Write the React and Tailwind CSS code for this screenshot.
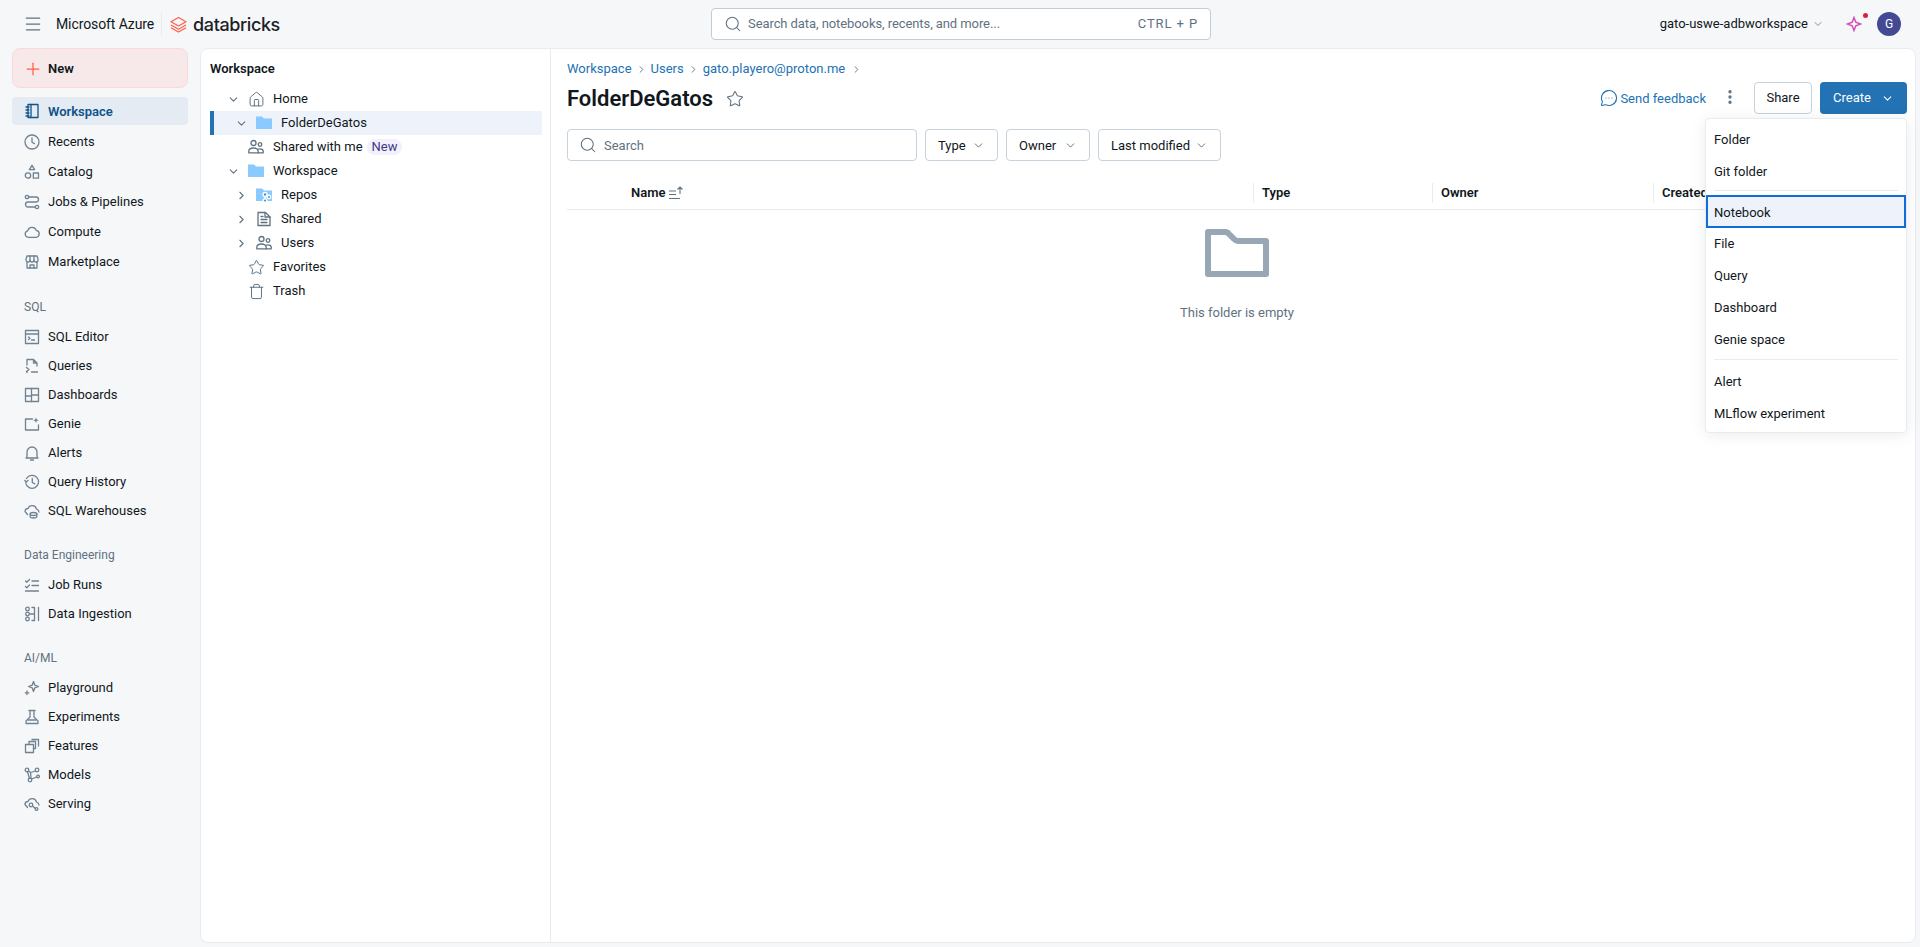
import { ChevronDown, ChevronRight, Menu, Plus, Search, Star, MoreVertical, MessageCircleMore, House, Trash } from 'lucide-react'

const FONT = "font-['Roboto','Noto_Sans',sans-serif]"

// stroke icon drawn on a 16 grid, same look as the product's icon set
function Ico({ children, size = 16, className = 'text-[#6f8291]' }) {
  return (
    <svg width={size} height={size} viewBox="0 0 16 16" fill="none" stroke="currentColor" strokeWidth="1.3" strokeLinecap="round" strokeLinejoin="round" className={`shrink-0 ${className}`}>
      {children}
    </svg>
  )
}

const icons = {
  workspace: <><path d="M4 1.5h10v13H4z" /><path d="M7 1.5v13" /><path d="M2 4h3M2 7h3M2 10h3M2 13h3" /></>,
  clock: <><circle cx="8" cy="8" r="7" /><path d="M8 4v4.2l2.4 1.4" /></>,
  catalog: <><path d="M8 1.3l2.6 4.4H5.400z" /><circle cx="4" cy="11.500" r="2.700" /><rect x="9.300" y="9" width="5.200" height="5.200" /></>,
  jobs: <><circle cx="3" cy="3" r="1.700" /><circle cx="13" cy="13" r="1.700" /><path d="M4.700 3H12a2.500 2.500 0 0 1 0 5H4a2.500 2.500 0 0 0 0 5h7.300" /></>,
  cloud: <path d="M4.300 13.300a3.300 3.300 0 0 1-.6-6.500 4.500 4.500 0 0 1 8.600-.4 3.500 3.500 0 0 1 0 6.900z" />,
  market: <><path d="M3 8v6h10V8" /><path d="M2 5l1-3h10l1 3v1a2 2 0 0 1-4 0 2 2 0 0 1-4 0 2 2 0 0 1-4 0z" /><path d="M6 14v-3h4v3M6 2v4M10 2v4" /></>,
  sqleditor: <><rect x="1.500" y="1.500" width="13" height="13" /><path d="M1.500 5h13" /><path d="M4.500 8l1.500 1.300-1.500 1.300M7.500 11h3" /></>,
  queries: <><path d="M3 7V1.500h6.500L13 5v3M9.500 1.500V5H13" /><path d="M3 14.500V13M2.500 9.500l2.500 2-2.500 2M7.500 14h6" /></>,
  dash: <><rect x="1.500" y="1.500" width="13" height="13" /><path d="M7.500 1.500v13M7.500 8h7" /><path d="M1.500 9h6" /></>,
  genie: <><path d="M8.500 3H1.500v11h13V9" /><path d="M12 1.500l.8 2 2 .8-2 .8-.8 2-.8-2-2-.8 2-.8z" fill="currentColor" stroke="none" /></>,
  bell: <><path d="M3 11.500V7a5 5 0 0 1 10 0v4.500l1 1.500H2z" /><path d="M6.500 15h3" /></>,
  history: <><path d="M2.500 4.500A6.500 6.500 0 1 1 1.700 9" /><path d="M.8 6.500l1.500 1.500 1.700-1.500" /><path d="M8.300 4.500v4l2.500 1.300" /></>,
  warehouse: <><path d="M3.500 11.500L1 8.500a3 3 0 0 1 3-3 4.500 4.500 0 0 1 8.500.5 3.500 3.500 0 0 1 2.500 3" /><ellipse cx="9.500" cy="11" rx="3.300" ry="1.500" /><path d="M6.200 11v2.500c0 .9 1.500 1.500 3.300 1.500s3.300-.6 3.300-1.500V11" /></>,
  jobruns: <><path d="M1.500 4l1.300 1.300L5.500 2.500M1.500 9.500l1.300 1.300 2.700-2.800" /><path d="M8 4h6.500M8 8.500h6.500M1.500 14h13" /></>,
  ingest: <><circle cx="3.500" cy="3" r="1.800" /><circle cx="3.500" cy="8" r="1.800" /><circle cx="3.500" cy="13" r="1.800" /><path d="M8 1.500h2.500v13H8M14.500 1.500v13M5.500 8h5" /></>,
  play: <><path d="M9.500 1.500l1.300 3.700 3.700 1.300-3.700 1.300-1.300 3.700-1.300-3.700L4.500 6.500l3.700-1.300z" /><path d="M3 11v3.500M1.200 12.800h3.600" /></>,
  flask: <><path d="M5 1.500h6M6 1.500V8l-4 4v2.500h12V12l-4-4V1.500" /><path d="M4 11h8" /></>,
  features: <><rect x="1.500" y="6.500" width="8" height="8" /><path d="M5 6.500V3.500h6.500v7H9.500M8 1.500h6.500V8" /></>,
  models: <><circle cx="3" cy="3" r="1.800" /><circle cx="13" cy="3" r="1.800" /><circle cx="6" cy="13" r="1.800" /><circle cx="14" cy="9.500" r="1.400" /><path d="M4.500 4l2 1.500 5-1.500M3.500 5l2 6.500M6.500 5.500L7 11M7.500 12l5.300-2" /></>,
  serving: <><path d="M3.500 11.500L1 8.500a3 3 0 0 1 3-3 4.500 4.500 0 0 1 8.500.5 3.500 3.500 0 0 1 2.500 3" /><circle cx="7" cy="9" r="1.800" /><path d="M8.500 10l2.800 2.500" /><circle cx="12.500" cy="13" r="1.400" /></>,
  people: <><circle cx="5.500" cy="4" r="2.500" /><circle cx="12" cy="5.500" r="1.800" /><path d="M.8 13.800v-1.300c0-2 1.800-3.500 4.700-3.500s4.700 1.500 4.700 3.500v1.300z" /><path d="M10.200 13.800h5v-1.500c0-1.500-1.500-2.500-3.200-2.500-.8 0-1.500.2-2 .5" /></>,
  doc: <><path d="M2 1.500h7.500l4.500 4.500v8.500H2z" /><path d="M9 1.500V6h5M5 8.500h6M5 11.500h6M5 5.500h2" /></>,
}

const PRIMARY = [['Recents', 'clock'], ['Catalog', 'catalog'], ['Jobs & Pipelines', 'jobs'], ['Compute', 'cloud'], ['Marketplace', 'market']]
const SECTIONS = [
  { title: 'SQL', items: [['SQL Editor', 'sqleditor'], ['Queries', 'queries'], ['Dashboards', 'dash'], ['Genie', 'genie'], ['Alerts', 'bell'], ['Query History', 'history'], ['SQL Warehouses', 'warehouse']] },
  { title: 'Data Engineering', items: [['Job Runs', 'jobruns'], ['Data Ingestion', 'ingest']] },
  { title: 'AI/ML', items: [['Playground', 'play'], ['Experiments', 'flask'], ['Features', 'features'], ['Models', 'models'], ['Serving', 'serving']] },
]
const MENU_TOP = ['Folder', 'Git folder']
const MENU_MID = ['File', 'Query', 'Dashboard', 'Genie space']
const MENU_END = ['Alert', 'MLflow experiment']

function FolderIcon({ git }) {
  return (
    <svg width="16" height="16" viewBox="0 0 16 16" className="shrink-0">
      <path d="M0 1.500h6l2 2h8v10.500H0z" fill="#8acaff" />
      {git && <g stroke="#fff" strokeWidth="1.400" fill="#4299e0"><path d="M9 8v5M9 9.500h4" fill="none" /><circle cx="9" cy="7.500" r="2" /><circle cx="13" cy="10" r="1.700" /><circle cx="9" cy="13.500" r="1.800" /></g>}
    </svg>
  )
}

function NavRow({ label, icon, tall }) {
  return (
    <div className={`flex items-center gap-[8px] pl-[12px] rounded-[4px] text-[13px] text-[#11171c] ${tall ? 'h-[30px]' : 'h-[29px]'}`}>
      <Ico><>{icons[icon]}</></Ico>
      <span>{label}</span>
    </div>
  )
}

function Sidebar() {
  return (
    <aside className="w-[200px] shrink-0 pl-[12px] pr-[12px] pb-[4px]">
      <div className="h-[40px] flex items-center gap-[5px] pl-[10px] pt-[1px] rounded-[8px] bg-[#f7e9e9] border border-[#fad9d9] text-[13px] font-semibold text-[#11171c]">
        <Plus size={20} strokeWidth={1.5} className="text-[#ff5f46]" />
        New
      </div>
      <div className="mt-[9px] h-[28px] mb-[1px] flex items-center gap-[8px] pl-[12px] pt-[2px] rounded-[4px] bg-[#e4ebf3] text-[13px] font-semibold text-[#0e538b]">
        <Ico className="text-[#0e538b] mt-[-2px]">{icons.workspace}</Ico>
        Workspace
      </div>
      <div className="pt-[1px]">
        {PRIMARY.map(([label, icon]) => <NavRow key={label} label={label} icon={icon} tall />)}
      </div>
      {SECTIONS.map(s => (
        <div key={s.title} className="mt-[15px]">
          <div className="h-[30px] flex items-center pl-[12px] text-[12px] text-[#5f7281]">{s.title}</div>
          {s.items.map(([label, icon]) => <NavRow key={label} label={label} icon={icon} />)}
        </div>
      ))}
    </aside>
  )
}

function TreeRow({ indent, chevron, icon, label, selected, badge }) {
  return (
    <div className={`h-[24px] flex items-center text-[13px] text-[#11171c] ${selected ? 'bg-[#eef3fb] border-l-[4px] border-[#2272b4]' : ''}`} style={{ paddingLeft: selected ? indent - 4 : indent }}>
      <span className="w-[16px] mr-[7px] flex justify-center shrink-0">
        {chevron === 'down' && <ChevronDown size={13} strokeWidth={2} className="text-[#5f7281]" />}
        {chevron === 'right' && <ChevronRight size={13} strokeWidth={2} className="text-[#5f7281]" />}
      </span>
      {icon}
      <span className="ml-[9px]">{label}</span>
      {badge && <span className="ml-[4px] px-[5px] h-[16px] rounded-[8px] bg-[#f3f0fb] text-[#3f3a86] flex items-center">{badge}</span>}
    </div>
  )
}

function Tree() {
  return (
    <div className="w-[350px] shrink-0 border-r border-[#e8ecf0] pl-[9px] pr-[8px] pt-[9px]">
      <div className="h-[21px] flex items-center text-[13px] font-semibold text-[#11171c] mb-[8px]">Workspace</div>
      <TreeRow indent={15} chevron="down" label="Home" icon={<House size={17} strokeWidth={1.4} className="text-[#5f7281] mx-[-0.5px]" />} />
      <TreeRow indent={23} chevron="down" label="FolderDeGatos" selected icon={<FolderIcon />} />
      <TreeRow indent={15} label="Shared with me" badge="New" icon={<Ico className="text-[#5f7281]">{icons.people}</Ico>} />
      <TreeRow indent={15} chevron="down" label="Workspace" icon={<FolderIcon />} />
      <TreeRow indent={23} chevron="right" label="Repos" icon={<FolderIcon git />} />
      <TreeRow indent={23} chevron="right" label="Shared" icon={<Ico className="text-[#5f7281]">{icons.doc}</Ico>} />
      <TreeRow indent={23} chevron="right" label="Users" icon={<Ico className="text-[#5f7281]">{icons.people}</Ico>} />
      <TreeRow indent={15} label="Favorites" icon={<Star size={17} strokeWidth={1.4} className="text-[#5f7281] mx-[-0.5px]" />} />
      <TreeRow indent={15} label="Trash" icon={<Trash size={17} strokeWidth={1.4} className="text-[#5f7281] mx-[-0.5px]" />} />
    </div>
  )
}

function FilterButton({ label, className }) {
  return (
    <div className={`h-[32px] flex items-center justify-between pl-[12px] pr-[12px] rounded-[4px] border border-[#c8d2db] text-[13px] text-[#11171c] ${className}`}>
      <span className="mt-[2px]">{label}</span>
      <ChevronDown size={13} strokeWidth={1.8} className="text-[#5f7281]" />
    </div>
  )
}

function MenuItem({ label }) {
  return <div className="h-[32px] flex items-center px-[8px] text-[13px] text-[#11171c]">{label}</div>
}

function CreateMenu() {
  return (
    <div className="absolute right-[8px] top-[69px] w-[202px] h-[315px] bg-white rounded-[4px] border border-[#e8ecf0] shadow-[0_2px_16px_rgba(0,0,0,0.08)] pt-[5px] z-10">
      {MENU_TOP.map(m => <MenuItem key={m} label={m} />)}
      <div className="mx-[8px] mt-[2px] mb-[4px] border-t border-[#e8ecf0]" />
      <div className="h-[33px] flex items-center px-[6px] pt-[2px] text-[13px] text-[#11171c] bg-[#eef3fb] border-2 border-[#0f6cd8]">Notebook</div>
      {MENU_MID.map(m => <MenuItem key={m} label={m} />)}
      <div className="mx-[8px] mt-[3px] mb-[6px] border-t border-[#e8ecf0]" />
      {MENU_END.map(m => <MenuItem key={m} label={m} />)}
    </div>
  )
}

function Content() {
  return (
    <div className="flex-1 min-w-0 relative pl-[16px] pr-[8px] pt-[10px]">
      <div className="h-[20px] flex items-center gap-[4px] text-[13px] text-[#2272b4]">
        <span>Workspace</span><ChevronRight size={11} className="text-[#5f7281]" />
        <span>Users</span><ChevronRight size={11} className="text-[#5f7281]" />
        <span className="mr-[2px]">gato.playero@proton.me</span><ChevronRight size={11} className="text-[#5f7281]" />
      </div>
      <div className="flex items-center mt-[3px] h-[32px]">
        <h1 className="text-[22px] font-semibold text-[#11171c]">FolderDeGatos</h1>
        <Star size={18} strokeWidth={1.4} className="text-[#5f7281] ml-[13px] mt-[2px]" />
        <div className="ml-auto flex items-center">
          <MessageCircleMore size={18} strokeWidth={1.5} className="text-[#2272b4]" />
          <span className="ml-[2px] mt-[2px] text-[13px] text-[#2272b4]">Send feedback</span>
          <MoreVertical size={18} strokeWidth={2.4} className="text-[#5f7281] ml-[15px] mt-[-2px]" />
          <div className="ml-[15px] w-[58px] h-[32px] flex items-center justify-center rounded-[4px] border border-[#c8d2db] text-[13px] text-[#11171c]">Share</div>
          <div className="ml-[8px] w-[87px] h-[32px] flex items-center justify-center gap-[10px] rounded-[4px] bg-[#2272b4] text-[13px] text-white">
            Create <ChevronDown size={13} strokeWidth={2} />
          </div>
        </div>
      </div>
      <div className="flex items-center mt-[15px] gap-[8px]">
        <div className="w-[350px] h-[32px] flex items-center gap-[7px] pl-[11px] rounded-[4px] border border-[#c8d2db] text-[13px] text-[#5f7281]">
          <Search size={18} strokeWidth={1.4} />
          <span className="mt-[2px]">Search</span>
        </div>
        <FilterButton label="Type" className="w-[73px]" />
        <FilterButton label="Owner" className="w-[84px]" />
        <FilterButton label="Last modified" className="w-[123px]" />
      </div>
      <div className="mt-[12px] h-[37px] pt-[4px] grid grid-cols-[686px_179px_221px_1fr] border-b border-[#e8ecf0] text-[13px] font-semibold text-[#11171c]">
        <div className="flex items-center gap-[3px] pl-[64px]">
          Name
          <svg width="16" height="16" viewBox="0 0 16 16" fill="none" stroke="#5f7281" strokeWidth="1.100"><path d="M1 6h7M1 9.500h7M1 13.500h11M12 9V2M9.500 4.500L12 2l2.500 2.500" /></svg>
        </div>
        {['Type', 'Owner', 'Created'].map(h => (
          <div key={h} className="flex items-center">
            <span className="h-[20px] border-l border-[#e8ecf0] pl-[8px] flex items-center">{h}</span>
          </div>
        ))}
      </div>
      <div className="flex flex-col items-center pt-[19px]">
        <svg width="64" height="48" viewBox="0 0 64 48" fill="none" stroke="#97a7b5" strokeWidth="6" strokeLinejoin="round">
          <path d="M3 3h17c2 0 3 .7 4 2l5 5c1 1 2 2 4 2h28v33H3z" />
        </svg>
        <div className="mt-[26px] text-[13px] text-[#5f7281]">This folder is empty</div>
      </div>
      <CreateMenu />
    </div>
  )
}

function TopBar() {
  return (
    <header className="h-[48px] flex items-center pl-[23px] pr-[19px]">
      <div className="w-[688px] flex items-center shrink-0">
        <Menu size={20} strokeWidth={1.5} className="text-[#5f7281]" />
        <span className="ml-[13px] text-[14px] tracking-[-0.1px] text-[#11171c]">Microsoft Azure</span>
        <span className="ml-[7px] h-[24px] border-l border-[#e8ecf0]" />
        <svg width="17" height="17" viewBox="0 0 18 18" fill="none" stroke="#ff5f46" strokeWidth="1.300" strokeLinejoin="round" className="ml-[8px]">
          <path d="M1 6l8-4.500L17 6 9 10.500zM1 9.500l8 4.500 8-4.500M1 12.500l8 4.500 8-4.500" />
        </svg>
        <span className="ml-[6px] text-[18px] font-['Inter',sans-serif] font-medium tracking-[-0.4px] text-[#1b2127]">databricks</span>
      </div>
      <div className="w-[500px] h-[32px] flex items-center rounded-[4px] border border-[#c0cdd8] bg-white pl-[12px] pr-[12px] text-[13px] text-[#5f7281]">
        <Search size={18} strokeWidth={1.4} />
        <span className="ml-[6px] tracking-[-0.08px]">Search data, notebooks, recents, and more...</span>
        <span className="ml-auto tracking-[0.9px]">CTRL + P</span>
      </div>
      <div className="ml-auto flex items-center">
        <span className="text-[13px] text-[#11171c]">gato-uswe-adbworkspace</span>
        <ChevronDown size={12} strokeWidth={1.5} className="text-[#5f7281] ml-[4px]" />
        <span className="relative ml-[22px] w-[16px] h-[16px] flex">
          <svg width="16" height="16" viewBox="0 0 16 16" fill="none" strokeWidth="1.500" stroke="#d04fb8"><path d="M8 1.500l1.800 4.700 4.700 1.800-4.700 1.800L8 14.500l-1.800-4.700L1.500 8l4.700-1.800z" /></svg>
          <span className="absolute right-[-6px] top-[-3px] w-[5px] h-[5px] rounded-full bg-[#d8203f]" />
        </span>
        <span className="ml-[15px] w-[24px] h-[24px] rounded-full bg-[#434a93] text-white text-[12px] flex items-center justify-center">G</span>
      </div>
    </header>
  )
}

export default function App() {
  return (
    <div className={`h-[947px] w-[1920px] overflow-hidden bg-[#f6f7f9] ${FONT}`}>
      <TopBar />
      <div className="flex h-[895px]">
        <Sidebar />
        <main className="flex-1 min-w-0 flex bg-white rounded-[8px] border border-[#e8ecf0] mr-[4px] mb-[4px] h-[895px]">
          <Tree />
          <Content />
        </main>
      </div>
    </div>
  )
}
